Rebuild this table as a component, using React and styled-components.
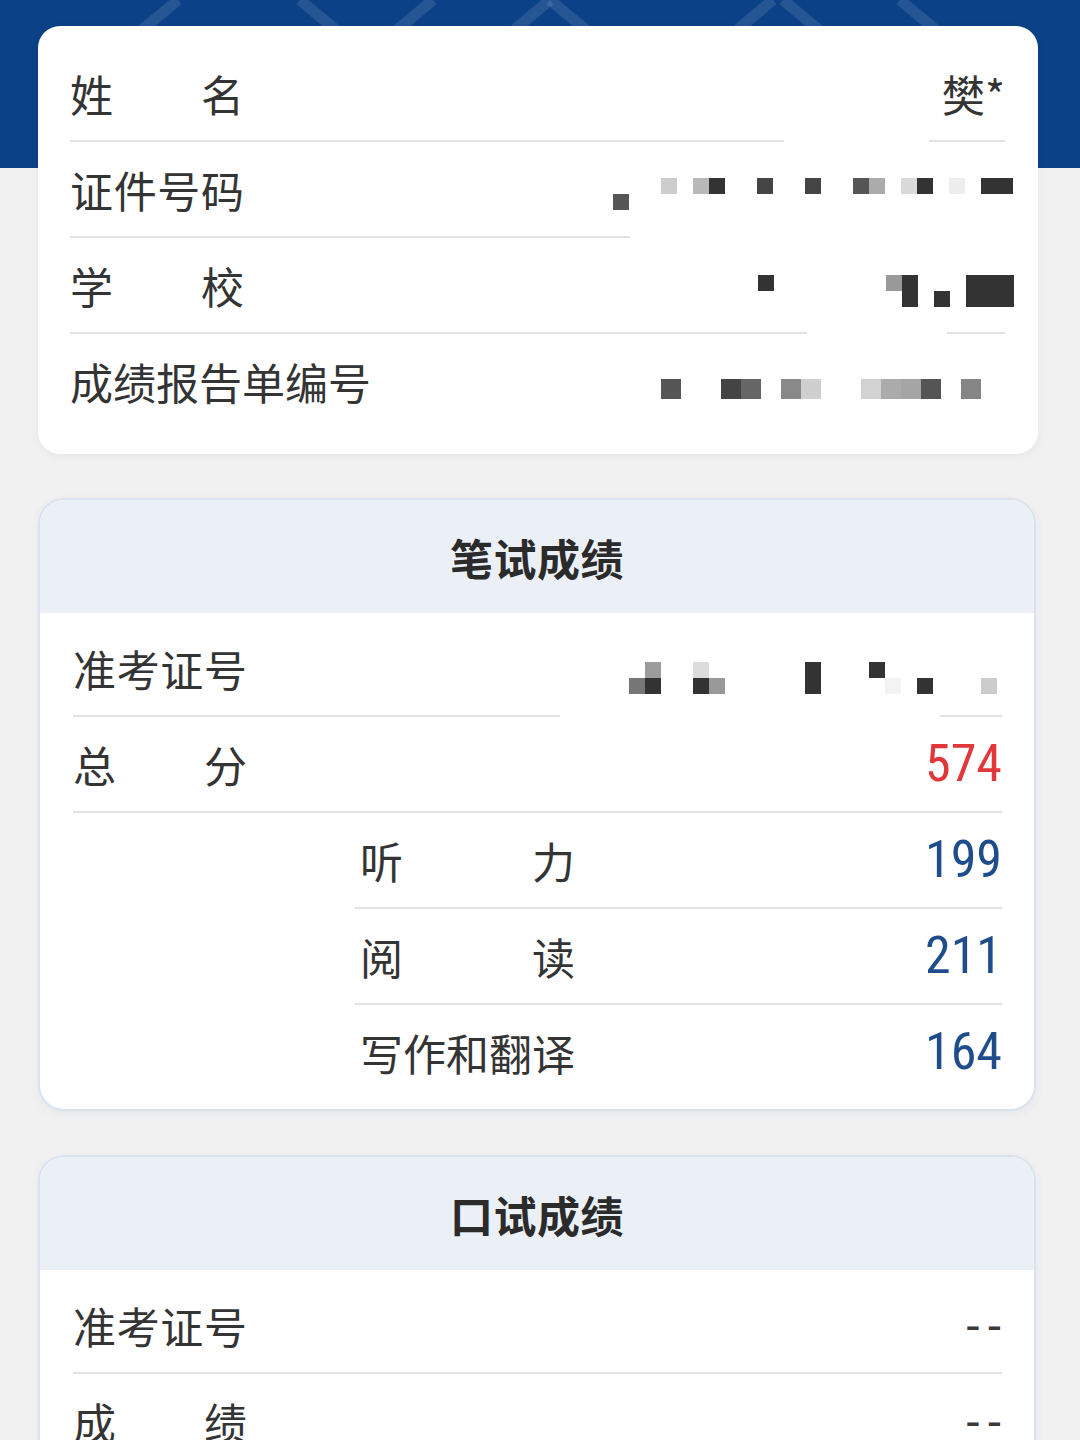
import React from "react";
import styled, { createGlobalStyle } from "styled-components";

const Global = createGlobalStyle`
  html, body { margin: 0; padding: 0; background: #f1f1f1; }
  body { font-family: "Noto Sans CJK SC", "Noto Sans", sans-serif; }
`;

const Page = styled.div`
  width: 1080px;
  min-height: 1440px;
  background: #f1f1f1;
  overflow: hidden;
`;

const Hero = styled.div`
  height: 168px;
  background: #0b4186;
  overflow: hidden;
  svg { display: block; }
`;

const Content = styled.div`
  position: relative;
  margin-top: -142px;
  padding: 0 42px 0 38px;
  display: flex;
  flex-direction: column;
  gap: 44px;
`;

const InfoCard = styled.section`
  background: #fff;
  border-radius: 22px;
  box-shadow: 0 2px 8px rgba(0, 0, 0, 0.05);
  padding: 20px 33px 26px 32px;
`;

const ScoreCard = styled.section`
  background: #fff;
  border: 2px solid #d9e3f0;
  border-radius: 26px;
  overflow: hidden;
  box-shadow: 0 3px 10px rgba(40, 70, 120, 0.06);
  margin-right: 2px;
`;

const CardHead = styled.header`
  height: 113px;
  background: #ebf0f7;
  display: flex;
  align-items: center;
  justify-content: center;
  font-size: 43px;
  font-weight: 700;
  color: #2b2b2b;
  letter-spacing: 0.5px;
`;

const CardBody = styled.div`
  padding: 8px 32px 10px 33px;
`;

const Row = styled.div`
  height: 94px;
  display: flex;
  align-items: center;
  justify-content: space-between;
  margin-left: ${(p) => p.$indent || 0}px;
`;

const Label = styled.span`
  display: inline-block;
  font-size: 43px;
  line-height: 1;
  color: #343434;
  white-space: nowrap;
  margin-left: ${(p) => p.$ml || 0}px;
  ${(p) =>
    p.$w
      ? `width: ${p.$w}px; text-align: justify; text-align-last: justify;`
      : ""}
`;

const Value = styled.span`
  font-size: 43px;
  line-height: 1;
  color: #343434;
`;

const Dash = styled.span`
  font-family: "Liberation Sans", Roboto, sans-serif;
  font-size: 46px;
  line-height: 1;
  color: #3a3a3a;
  letter-spacing: 6px;
  margin-right: -6px;
`;

const Score = styled.span`
  font-family: "Liberation Sans Narrow", "Roboto Condensed", Roboto, sans-serif;
  font-size: 52px;
  line-height: 1;
  color: ${(p) => (p.$tone === "red" ? "#e2373a" : "#1f4d8b")};
`;

const Divider = styled.div`
  height: 2px;
  margin-left: ${(p) => p.$indent || 0}px;
  background: ${(p) =>
    p.$cut
      ? `linear-gradient(to right, #e3e3e3 0 ${p.$cut}px, transparent ${p.$cut}px ${
          p.$resume || 99999
        }px, #e3e3e3 ${p.$resume || 99999}px)`
      : "#e3e3e3"};
`;

const Mosaic = styled.div`
  display: grid;
  grid-template-columns: repeat(${(p) => p.$cols}, ${(p) => p.$size}px);
  grid-template-rows: repeat(${(p) => p.$rows}, ${(p) => p.$size}px);
  margin-top: ${(p) => p.$dy || 0}px;
  margin-right: ${(p) => p.$mr || 0}px;
`;

const Cell = styled.span`
  grid-column: ${(p) => p.$c + 1} / span ${(p) => p.$w || 1};
  grid-row: ${(p) => p.$r + 1} / span ${(p) => p.$h || 1};
  background: ${(p) => p.$bg};
`;

const Blur = ({ cols, rows, size, dy, mr, cells }) => (
  <Mosaic $cols={cols} $rows={rows} $size={size} $dy={dy} $mr={mr}>
    {cells.map(([c, r, bg, w, h], i) => (
      <Cell key={i} $c={c} $r={r} $bg={bg} $w={w} $h={h} />
    ))}
  </Mosaic>
);

const idCells = [
  [0, 1, "#565656"],
  [3, 0, "#cdcdcd"],
  [5, 0, "#b9b9b9"],
  [6, 0, "#333"],
  [9, 0, "#454545"],
  [12, 0, "#454545"],
  [15, 0, "#565656"],
  [16, 0, "#ababab"],
  [18, 0, "#dadada"],
  [19, 0, "#333"],
  [21, 0, "#ededed"],
  [23, 0, "#333", 2],
];

const schoolCells = [
  [0, 0, "#333"],
  [8, 0, "#999"],
  [9, 0, "#333", 1, 2],
  [11, 1, "#333"],
  [13, 0, "#333", 3, 2],
];

const reportCells = [
  [0, 0, "#565656"],
  [3, 0, "#444"],
  [4, 0, "#666"],
  [6, 0, "#898989"],
  [7, 0, "#cfcfcf"],
  [10, 0, "#d2d2d2"],
  [11, 0, "#ababab"],
  [12, 0, "#a5a5a5"],
  [13, 0, "#555"],
  [15, 0, "#858585"],
];

const ticketCells = [
  [0, 1, "#777"],
  [1, 0, "#9b9b9b"],
  [1, 1, "#333"],
  [4, 0, "#dcdcdc"],
  [4, 1, "#333"],
  [5, 1, "#999"],
  [11, 0, "#333", 1, 2],
  [15, 0, "#333"],
  [16, 1, "#f3f3f3"],
  [18, 1, "#333"],
  [22, 1, "#cccccc"],
];

/* short faint strokes only visible above the first card */
const heroLines = [
  [178, 0, 142, 30],
  [300, 0, 336, 30],
  [433, 0, 397, 30],
  [550, 0, 514, 30],
  [550, 0, 586, 30],
  [773, 0, 737, 30],
  [783, 0, 819, 30],
  [900, 0, 936, 30],
];

export default function App() {
  return (
    <Page>
      <Global />
      <Hero>
        <svg width="1080" height="168" viewBox="0 0 1080 168">
          {heroLines.map(([x1, y1, x2, y2], i) => (
            <line
              key={i}
              x1={x1}
              y1={y1}
              x2={x2}
              y2={y2}
              stroke="rgba(255,255,255,0.11)"
              strokeWidth="11"
            />
          ))}
        </svg>
      </Hero>
      <Content>
        <InfoCard>
          <Row>
            <Label $w={174}>姓名</Label>
            <Value>樊*</Value>
          </Row>
          <Divider $cut={714} $resume={859} />
          <Row>
            <Label $w={174}>证件号码</Label>
            <Blur cols={25} rows={2} size={16} dy={10} mr={-8} cells={idCells} />
          </Row>
          <Divider $cut={560} />
          <Row>
            <Label $w={174}>学校</Label>
            <Blur cols={16} rows={2} size={16} dy={12} mr={-9} cells={schoolCells} />
          </Row>
          <Divider $cut={737} $resume={877} />
          <Row>
            <Label>成绩报告单编号</Label>
            <Blur cols={16} rows={1} size={20} dy={16} mr={24} cells={reportCells} />
          </Row>
        </InfoCard>

        <ScoreCard>
          <CardHead>笔试成绩</CardHead>
          <CardBody>
            <Row>
              <Label $w={174}>准考证号</Label>
              <Blur cols={23} rows={2} size={16} dy={20} mr={5} cells={ticketCells} />
            </Row>
            <Divider $cut={487} $resume={867} />
            <Row>
              <Label $w={174}>总分</Label>
              <Score $tone="red">574</Score>
            </Row>
            <Divider />
            <Row $indent={282}>
              <Label $w={215} $ml={5}>听力</Label>
              <Score>199</Score>
            </Row>
            <Divider $indent={282} />
            <Row $indent={282}>
              <Label $w={215} $ml={5}>阅读</Label>
              <Score>211</Score>
            </Row>
            <Divider $indent={282} />
            <Row $indent={282}>
              <Label $w={215} $ml={5}>写作和翻译</Label>
              <Score>164</Score>
            </Row>
          </CardBody>
        </ScoreCard>

        <ScoreCard>
          <CardHead>口试成绩</CardHead>
          <CardBody>
            <Row>
              <Label $w={174}>准考证号</Label>
              <Dash>--</Dash>
            </Row>
            <Divider />
            <Row>
              <Label $w={174}>成绩</Label>
              <Dash>--</Dash>
            </Row>
          </CardBody>
        </ScoreCard>
      </Content>
    </Page>
  );
}
